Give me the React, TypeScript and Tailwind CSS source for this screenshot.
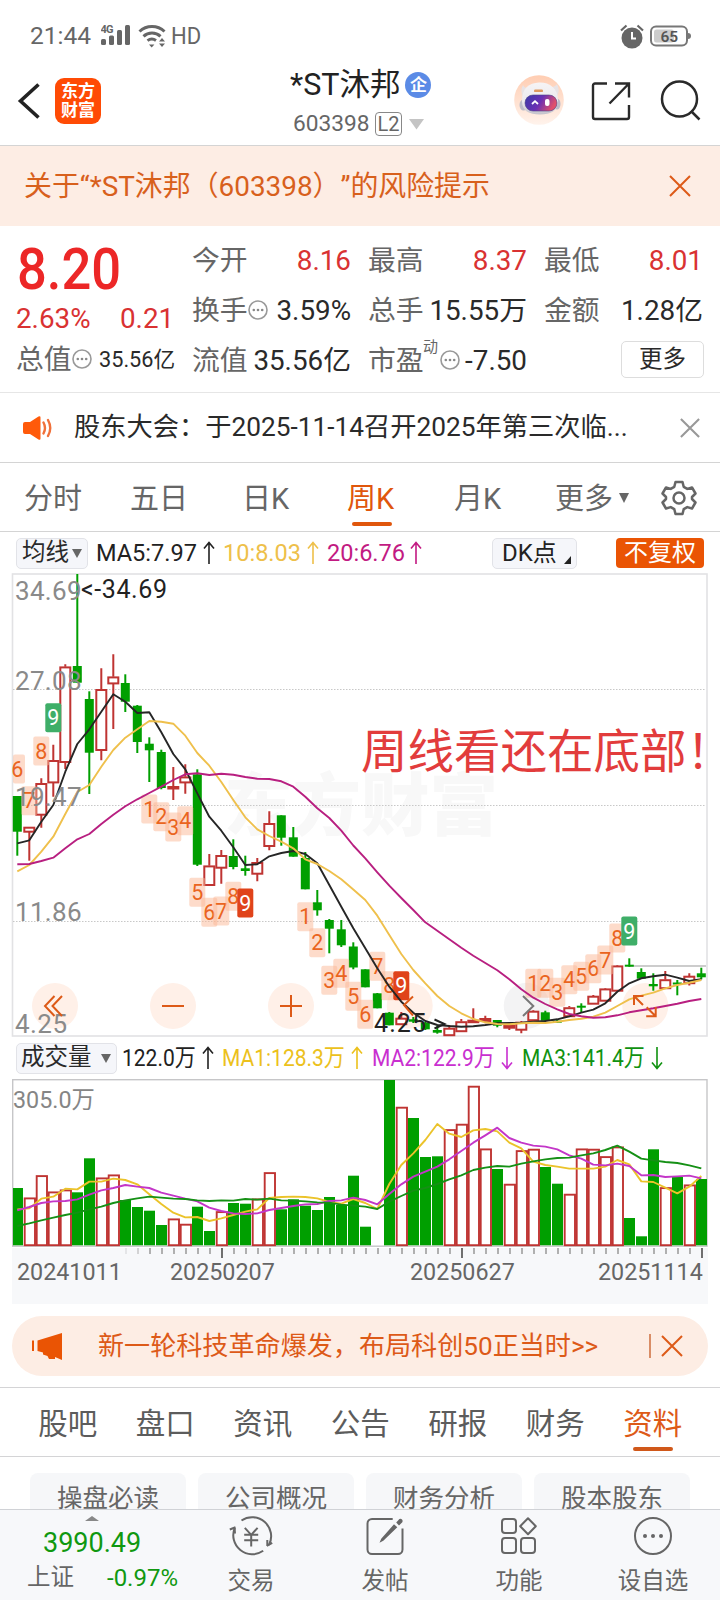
import type { ReactNode } from "react";

type Candle = [up: 0 | 1, top: number, bottom: number, high: number, low: number];

const X0 = 17.3;
const STEP = 12;
const px = (i: number) => X0 + STEP * i;

const GREEN = "#009f00";
const RED = "#bf3432";

const candles: Candle[] = [
  [0, 796, 831.7, 796, 855.7], [1, 827, 832, 827, 860.7], [1, 783.3, 815, 778.3, 827.7],
  [1, 760.3, 782.7, 744.7, 796.7], [1, 666.7, 762.3, 664.3, 769], [0, 666, 682.7, 574, 682.7],
  [0, 699, 752.7, 691.3, 794], [1, 689.3, 750.3, 668.3, 760.3], [1, 676.7, 683.7, 654.3, 729],
  [0, 683, 701.7, 674.3, 712], [0, 705.7, 742, 705, 753], [0, 743.7, 750.3, 737.3, 782],
  [0, 752, 788, 749.7, 789.3], [1, 786.3, 788.7, 767, 800], [1, 776.7, 782.7, 764.3, 793.7],
  [0, 774.3, 864.7, 769.3, 866], [1, 865.7, 885.3, 854, 885.3], [1, 855.3, 868, 850, 883.7],
  [0, 856, 867, 839.3, 869.3], [0, 868.3, 871, 855.7, 875.7], [1, 862.3, 874, 858, 881.3],
  [1, 823.3, 846.3, 811.3, 850.3], [0, 815.3, 837.7, 815.3, 845.7], [0, 837.3, 856.7, 827, 856.7],
  [0, 858, 889.3, 852, 889.3], [0, 902.3, 910.3, 890, 915.7], [0, 920, 928.7, 919, 953.3],
  [0, 929.3, 945.3, 920, 947], [0, 946.5, 967.5, 942.3, 969.3], [0, 969.3, 987.3, 969.3, 987.3],
  [0, 993.3, 1008.3, 993, 1008.3], [0, 1012.7, 1025.3, 1012, 1025.3], [1, 1018, 1024.5, 1012, 1025],
  [0, 1019.3, 1021.7, 1017, 1023], [0, 1022.7, 1029.3, 1022, 1030], [0, 1030, 1032.7, 1026, 1033.7],
  [1, 1028, 1035.5, 1025, 1036], [1, 1021.5, 1031.5, 1019, 1032], [1, 1020, 1021.7, 1008.3, 1021.7],
  [1, 1018.3, 1021.3, 1015.7, 1023.3], [0, 1020, 1025.7, 1020, 1027.3], [1, 1025, 1028, 1023, 1030],
  [1, 1022, 1030, 1021, 1033.3], [1, 1011, 1020.5, 1010.3, 1021], [0, 1012.3, 1020.7, 1010.7, 1021],
  [0, 1020.7, 1022.7, 1020, 1023], [1, 1007.5, 1016.5, 1006, 1017], [0, 1005.7, 1007.7, 1003.3, 1012.7],
  [1, 996, 1004, 995, 1004], [1, 988.7, 1001, 988, 1001], [1, 965.7, 991, 965, 991],
  [0, 964.7, 966.7, 958.3, 966.7], [0, 972, 978.7, 968.3, 978.7], [0, 984, 986.3, 973.3, 990.7],
  [1, 979.5, 988.5, 971, 989], [0, 982.5, 984.5, 980, 995.3], [1, 976, 983.5, 973.3, 985.5],
  [0, 973.3, 977.3, 967.7, 979.3],
];

const ma5 = [843.3, 840.3, 821.7, 805, 771.7, 744, 729.3, 711.7, 694.3, 701.7, 713, 712.3, 732.3, 754, 769.3, 793.3, 816.7, 830.7, 847.3, 865, 864.3, 856.3, 853, 851, 854, 863.3, 885, 906.7, 928.3, 948.3, 968.3, 986.7, 1001.7, 1012.7, 1021, 1025, 1026, 1026.7, 1026.3, 1025, 1023.3, 1023, 1022.7, 1021.7, 1021, 1019.3, 1016.3, 1012.7, 1009.7, 1003.3, 991.7, 983.3, 978.3, 976.3, 974.7, 977.7, 981, 979.3];
const ma10 = [871.3, 865, 851.7, 836.7, 814, 792, 785, 766.7, 750, 737.7, 729.3, 721, 721.7, 723.7, 735.7, 753, 765.7, 782, 800, 817.3, 829.3, 836, 841.7, 848.3, 859.3, 864, 871, 879.3, 889.5, 900, 915.7, 935, 954, 970, 983.3, 996, 1006, 1013.3, 1019, 1022.3, 1024, 1024.3, 1023.3, 1022.7, 1023, 1021.7, 1020, 1018.7, 1016.7, 1012.7, 1006, 999.3, 995.7, 992.7, 988.3, 985, 982.7, 980];
const ma20 = [864.3, 864, 861, 857.7, 848.3, 839.3, 834, 824, 814.7, 806.3, 799.3, 793, 786.7, 780, 774.3, 773.3, 775, 773.7, 774.7, 777, 778.7, 779, 781.3, 786.7, 796.7, 808.3, 818, 830.7, 845.5, 858.3, 872.3, 885.7, 898, 910, 922.3, 930.7, 939.3, 947.7, 955.7, 963, 970.3, 979.3, 989.3, 997.7, 1004, 1009.3, 1014, 1016.3, 1017.7, 1017.3, 1015.3, 1012.3, 1010.3, 1008.3, 1006, 1003.7, 1001, 999];

const volumeTop = [1188, 1198, 1175.7, 1192, 1190, 1192.3, 1158.3, 1178, 1175, 1200, 1207, 1210.7, 1225, 1219, 1224.3, 1206.7, 1231, 1211.7, 1203, 1203.7, 1199, 1172.7, 1209.3, 1199.3, 1205.7, 1210, 1197, 1205, 1175.7, 1226.7, 1245.3, 1080, 1107.3, 1118, 1157, 1156.3, 1129.7, 1124.3, 1086.3, 1149, 1169, 1184.3, 1150.7, 1149.3, 1167, 1183.7, 1194.3, 1149, 1149.3, 1156.7, 1147, 1218, 1236.3, 1149.3, 1187.7, 1177, 1185, 1179];
const volumeUp = new Set([1, 2, 3, 4, 7, 8, 13, 14, 17, 20, 21, 32, 36, 37, 38, 39, 41, 42, 43, 46, 47, 48, 49, 50, 54, 56]);

// Volume averages, in thirds of a pixel below y = 1030.
const third = (v: number) => 1030 + v / 3;
const vma1 = [538, 535, 506, 500, 476, 478, 455, 455, 446, 450, 463, 493, 522, 548, 562, 561, 573, 565, 555, 545, 538, 504, 501, 500, 501, 505, 516, 521, 507, 519, 537, 462, 405, 370, 330, 282, 311, 321, 301, 297, 304, 338, 355, 395, 405, 410, 416, 416, 416, 410, 390, 403, 454, 456, 473, 490, 470, 438].map(third);
const vma2 = [541, 531, 519, 514, 513, 508, 494, 481, 474, 465, 470, 474, 488, 497, 506, 514, 533, 543, 550, 552, 550, 540, 534, 528, 523, 522, 513, 511, 503, 510, 523, 492, 463, 440, 425, 410, 388, 363, 338, 316, 293, 324, 338, 347, 350, 358, 376, 386, 404, 406, 401, 408, 436, 435, 441, 439, 437, 445].map(third);
const vma3 = [588, 580, 571, 563, 555, 548, 538, 530, 519, 511, 505, 500, 503, 506, 507, 511, 513, 511, 512, 507, 509, 506, 511, 512, 514, 517, 518, 524, 527, 530, 537, 515, 498, 482, 474, 462, 448, 436, 420, 413, 408, 410, 401, 394, 388, 384, 383, 376, 370, 360, 347, 365, 386, 391, 396, 399, 406, 415].map(third);

const marks: [i: number, label: string, y: number, fill?: string][] = [
  [0, "6", 769], [1, "7", 800.7], [2, "8", 751], [3, "9", 717.7, "#3fae68"],
  [11, "1", 809], [12, "2", 816.7], [13, "3", 827], [14, "4", 820.7],
  [15, "5", 892.3], [16, "6", 912.3], [17, "7", 911], [18, "8", 896.3], [19, "9", 903, "#e0431a"],
  [24, "1", 916.7], [25, "2", 942.7], [26, "3", 980.3], [27, "4", 973.3], [28, "5", 996.3], [29, "6", 1014.3],
  [30, "7", 966.3], [31, "8", 985.7], [32, "9", 985.7, "#e0431a"],
  [43, "1", 983.3], [44, "2", 983.3], [45, "3", 992.3], [46, "4", 979.7], [47, "5", 976.3],
  [48, "6", 968.7], [49, "7", 960], [50, "8", 938], [51, "9", 931, "#3fae68"],
];

const line = (ys: number[]) => ys.map((y, i) => `${px(i)},${y}`).join(" ");

function Cross({ size, color, width = 2 }: { size: number; color: string; width?: number }) {
  return (
    <svg width={size} height={size} viewBox="0 0 22 22" stroke={color} strokeWidth={width} fill="none" className="shrink-0">
      <path d="M1 1 21 21M21 1 1 21" />
    </svg>
  );
}

function Arrow({ down, color }: { down?: boolean; color: string }) {
  return (
    <svg width="12" height="24" viewBox="0 0 12 24" fill="none" stroke={color} strokeWidth="1.6" className="shrink-0">
      <path d={down ? "M6 1v21M1 16.5l5 6 5-6" : "M6 23V2M1 7.5l5-6 5 6"} />
    </svg>
  );
}

function Dots() {
  return (
    <svg width="20" height="22" viewBox="0 0 20 22" className="shrink-0">
      <circle cx="10" cy="10" r="9" fill="none" stroke="#999" strokeWidth="1.6" />
      <g fill="#888">
        <circle cx="5.8" cy="10" r="1.3" />
        <circle cx="10" cy="10" r="1.3" />
        <circle cx="14.2" cy="10" r="1.3" />
      </g>
    </svg>
  );
}

function StatusBar() {
  return (
    <div className="flex h-[72px] shrink-0 items-center pl-[30px] text-[24.5px] leading-none text-[#666]">
      <span className="w-[71px]">21:44</span>
      <svg width="30" height="22" viewBox="0 0 30 22" fill="#666" className="-mt-0.5">
        <text x="-0.5" y="8.5" fontSize="11" fontWeight="700" textLength="13">4G</text>
        <rect x="0" y="15" width="5" height="6" rx="1.5" />
        <rect x="8" y="11.5" width="5" height="9.5" rx="1.5" />
        <rect x="16" y="6" width="5" height="15" rx="1.5" />
        <rect x="24" y="1" width="5" height="20" rx="1.5" />
      </svg>
      <svg width="29" height="24" viewBox="0 0 29 24" fill="none" stroke="#666" strokeWidth="3" className="ml-[7px]">
        <path d="M1.5 7.5a18 18 0 0 1 25 0" />
        <path d="M5.5 12.3a12.5 12.5 0 0 1 17 0" />
        <path d="M9.5 16.6a7.3 7.3 0 0 1 8.5-.2" />
        <path d="M11 20.5h5.4L13.7 23.5z" fill="#666" stroke="none" />
        <path d="M21 17.5h6l-3-3.5zM21 19.5h6l-3 3.5z" fill="#666" stroke="none" />
      </svg>
      <span className="ml-[4px] w-[29px]">
        <span className="inline-block origin-left scale-x-[0.9]">HD</span>
      </span>
      <svg width="24" height="25" viewBox="0 0 24 25" fill="none" className="ml-[420px]">
        <circle cx="12" cy="14" r="10.5" fill="#666" />
        <path d="M1 6.5 6.5 1.5M23 6.5 17.5 1.5" stroke="#666" strokeWidth="2.2" />
        <path d="M12 8v6.5h4" stroke="#fff" strokeWidth="2" />
      </svg>
      <svg width="42" height="22" viewBox="0 0 42 22" fill="none" className="-mt-px ml-[6px]">
        <rect x="1" y="1.5" width="36" height="19" rx="5" stroke="#777" strokeWidth="2" />
        <rect x="4" y="4.5" width="20" height="13" rx="2.5" fill="#ccc" />
        <path d="M38 8q3 0 3 3t-3 3z" fill="#777" />
        <text x="19.3" y="16.5" fontSize="15.5" fontWeight="600" fill="#555" textAnchor="middle">65</text>
      </svg>
    </div>
  );
}

function Header() {
  return (
    <div className="flex h-[74px] shrink-0 items-start border-b border-[#d4d4d4]">
      <svg width="24" height="36" viewBox="0 0 24 36" fill="none" stroke="#222" strokeWidth="3.6" className="mt-[11px] ml-[17px]">
        <path d="M21.5 1.5 3.5 18l18 16.5" />
      </svg>
      <div className="mt-[6px] ml-[14px] flex h-[46px] w-[46px] flex-col items-center justify-center rounded-[9px] bg-[#ff4b05] text-[17px] leading-[19px] font-bold text-white">
        <span>东方</span>
        <span>财富</span>
      </div>
      <div className="ml-[187px] w-[150px]">
        <div className="-mt-[3px] flex h-[32px] items-center text-[30.5px] leading-none whitespace-nowrap text-[#222]">
          <span className="ml-[2px]">*ST沐邦</span>
          <span className="ml-[5px] flex h-[26px] w-[26px] items-center justify-center rounded-full bg-[#5b8be6] text-[17px] font-bold text-white">
            企
          </span>
        </div>
        <div className="mt-[11px] flex h-[24px] items-center pl-[5px] text-[22.7px] leading-none text-[#666]">
          <span className="w-[82px]">603398</span>
          <span className="flex h-[24px] w-[27px] items-center justify-center rounded-[4px] border-[1.5px] border-[#888] text-[20px]">L2</span>
          <svg width="15" height="11" viewBox="0 0 15 11" className="ml-[7px]">
            <path d="M0 0h15L7.5 10.5z" fill="#c4c4c4" />
          </svg>
        </div>
      </div>
      <svg width="50" height="50" viewBox="0 0 50 50" className="mt-[3px] ml-[76px]">
        <defs>
          <linearGradient id="halo" x1="0" y1="0" x2="0" y2="1">
            <stop offset="0" stopColor="#ffcdb2" />
            <stop offset="1" stopColor="#fff3ec" />
          </linearGradient>
          <linearGradient id="visor" x1="0" y1="0" x2="1" y2="0.3">
            <stop offset="0" stopColor="#3a3aa8" />
            <stop offset="0.55" stopColor="#6a30b4" />
            <stop offset="1" stopColor="#e0506c" />
          </linearGradient>
          <linearGradient id="shell" x1="0" y1="0" x2="0" y2="1">
            <stop offset="0" stopColor="#f6f4f5" />
            <stop offset="0.6" stopColor="#eceaee" />
            <stop offset="1" stopColor="#c3c2cb" />
          </linearGradient>
        </defs>
        <circle cx="25" cy="25" r="24.8" fill="url(#halo)" />
        <path d="M9 22Q6 15 9 10q2 4 7 3zM42 22q5-6 1-13-2 3-8 4z" fill="#e8e3e5" />
        <ellipse cx="9.5" cy="30" rx="4" ry="5.5" fill="#bdbcc8" />
        <ellipse cx="43" cy="29" rx="3.5" ry="5.5" fill="#bdbcc8" />
        <path d="M8 26C8 13 15 8 25 7.500S44 13 44 25c0 11-7 14.500-18 14.500S8 36 8 26z" fill="url(#shell)" />
        <rect x="20" y="14.5" width="9" height="2.6" rx="1.200" fill="#e09a60" />
        <rect x="11" y="20" width="32" height="16" rx="8" fill="url(#visor)" stroke="#4b3f86" strokeWidth="0.600" />
        <path d="m18 29 3-2.800 3 2.800" stroke="#fff" strokeWidth="1.800" fill="none" />
        <rect x="31" y="24" width="4.500" height="7" rx="2" fill="#fff" />
      </svg>
      <svg width="40" height="40" viewBox="0 0 40 40" fill="none" stroke="#2a2a2a" strokeWidth="2.4" className="mt-[9px] ml-[27px]">
        <path d="M16 2.5H4a2 2 0 0 0-2 2V36a2 2 0 0 0 2 2h32a2 2 0 0 0 2-2V24" />
        <path d="M24 2.5h14V16.500M38 2.5 18.5 22.5" />
      </svg>
      <svg width="42" height="42" viewBox="0 0 42 42" fill="none" stroke="#2a2a2a" strokeWidth="2.5" className="mt-[8px] ml-[29px]">
        <circle cx="19.5" cy="19" r="17.5" />
        <path d="m31 31 8.5 8.5" />
      </svg>
    </div>
  );
}

function Cell({ label, value, tone = "text-[#2a2a2a]", extra }: { label: string; value: string; tone?: string; extra?: ReactNode }) {
  return (
    <div className="flex items-center whitespace-nowrap">
      <span className="w-[55px] text-[#666]">{label}</span>
      {extra}
      <span className={`ml-auto ${tone}`}>{value}</span>
    </div>
  );
}

function Quote() {
  const red = "text-[#d93232]";
  return (
    <div className="flex h-[167px] shrink-0 border-b border-[#e6e6e6] pt-[9.5px] text-[27.8px] leading-none">
      <div className="w-[192px] pl-[16px]">
        <div className="mt-[8px] h-[52px] pl-[1px] text-[56.5px] leading-[52px] font-medium text-[#ec2727]">
          <span className="inline-block origin-left scale-x-[0.93]">8.20</span>
        </div>
        <div className={`mt-[6px] flex h-[34px] items-center ${red}`}>
          <span className="w-[104px]">2.63%</span>
          <span>0.21</span>
        </div>
        <div className="mt-[7px] flex h-[34px] items-center whitespace-nowrap text-[#666]">
          <span className="w-[55px]">总值</span>
          <span className="ml-px"><Dots /></span>
          <span className="ml-[7px] text-[21.7px] text-[#2a2a2a]">35.56亿</span>
        </div>
      </div>
      <div className="grid grid-cols-[159px_159px_159px] grid-rows-[50px_50px_50px] gap-x-[17px]">
        <Cell label="今开" value="8.16" tone={red} />
        <Cell label="最高" value="8.37" tone={red} />
        <Cell label="最低" value="8.01" tone={red} />
        <Cell label="换手" value="3.59%" extra={<span className="ml-px"><Dots /></span>} />
        <Cell label="总手" value="15.55万" />
        <Cell label="金额" value="1.28亿" />
        <Cell label="流值" value="35.56亿" />
        <Cell
          label="市盈"
          value="-7.50"
          extra={
            <>
              <span className="-mt-[26px] w-[17px] text-[15px] text-[#666]">动</span>
              <Dots />
            </>
          }
        />
        <div className="flex items-center justify-end">
          <div className="-mr-[1px] -mt-0.5 flex h-[37px] w-[83px] items-center justify-center rounded-[5px] border-[1.5px] border-[#ddd] text-[23.5px] text-[#2a2a2a]">更多</div>
        </div>
      </div>
    </div>
  );
}

function News() {
  return (
    <div className="flex h-[70px] shrink-0 items-center border-b border-[#d4d4d4] pl-[23px] leading-none">
      <svg width="30" height="24" viewBox="0 0 30 24" fill="none" className="shrink-0">
        <path d="M0 8q0-2 2-2h5l8.500-5.500q2-1 2 1v21q0 2-2 1L7 18H2q-2 0-2-2z" fill="#ff5a0a" />
        <path d="M20.5 6.5q3 5.500 0 11M25 4q4.500 8 0 16" stroke="#f0703a" strokeWidth="2.4" strokeLinecap="round" />
      </svg>
      <span className="ml-[21px] w-[606px] text-[26.25px] whitespace-nowrap text-[#2a2a2a]">股东大会：于2025-11-14召开2025年第三次临...</span>
      <Cross size={20} color="#999" width={2.3} />
    </div>
  );
}

function PeriodTabs() {
  return (
    <div className="flex h-[69px] shrink-0 items-center border-b border-[#d4d4d4] pt-[5px] pl-[24px] text-[29px] leading-none whitespace-nowrap text-[#666]">
      <span className="w-[106px]">分时</span>
      <span className="w-[112px]">五日</span>
      <span className="w-[105px]">日K</span>
      <span className="flex h-full w-[107px] flex-col text-[#e0560c]">
        <span className="mt-[17px]">周K</span>
        <span className="mt-[8px] ml-[5px] h-[4px] w-[40px] rounded-full bg-[#e0560c]" />
      </span>
      <span className="w-[101px]">月K</span>
      <span className="w-[64px]">更多</span>
      <svg width="10" height="10" viewBox="0 0 10 10" fill="#666" className="-mt-1">
        <path d="M0 0h10L5 10z" />
      </svg>
      <svg width="36" height="36" viewBox="0 0 36 36" fill="none" stroke="#666" strokeWidth="2.5" strokeLinejoin="round" className="-mt-1 ml-[32px]">
        <path d="M14.5 2h7l1.2 4.8 3.6 2.1 4.7-1.4 3.5 6L31 17v2l3.5 3.5-3.5 6-4.700-1.400-3.600 2.100L21.500 34h-7l-1.200-4.800-3.600-2.100L5 28.500l-3.500-6L5 19v-2l-3.500-3.500 3.500-6 4.700 1.400 3.600-2.100z" />
        <circle cx="18" cy="18" r="5.5" />
      </svg>
    </div>
  );
}

function AverageRow() {
  return (
    <div className="flex h-[41px] shrink-0 items-center pt-px pl-[16px] text-[24px] leading-none whitespace-nowrap">
      <div className="flex h-[31px] w-[72px] items-center rounded-[5px] border-[1.5px] border-[#e2e3e8] bg-[#f5f6fa] pl-[5px] text-[23.5px] text-[#2a2a2a]">
        均线
        <svg width="10" height="9" viewBox="0 0 10 9" fill="#666" className="ml-[3px]">
          <path d="M0 0h10L5 9z" />
        </svg>
      </div>
      <span className="ml-[8px] w-[107px] text-[#222]"><span className="inline-block origin-left scale-x-[0.98]">MA5:7.97</span></span>
      <Arrow color="#222" />
      <span className="ml-[8px] w-[84px] text-[#eec04a]"><span className="inline-block origin-left scale-x-[0.98]">10:8.03</span></span>
      <Arrow color="#eec04a" />
      <span className="ml-[8px] w-[83px] text-[#c21a82]"><span className="inline-block origin-left scale-x-[0.98]">20:6.76</span></span>
      <Arrow color="#c21a82" />
      <div className="ml-[70px] flex h-[31px] w-[85px] items-center rounded-[5px] border-[1.5px] border-[#e2e3e8] bg-[#f5f6fa] pl-[9px] text-[#222]">
        DK点
        <svg width="7" height="8" viewBox="0 0 7 8" fill="#222" className="mt-[14px] ml-[7px]">
          <path d="M7 0v8H0z" />
        </svg>
      </div>
      <div className="ml-[39px] flex h-[30px] w-[88px] items-center justify-center rounded-[4px] bg-[#ea5404] text-[24px] text-white">不复权</div>
    </div>
  );
}

function PriceChart() {
  return (
    <svg width="720" height="464" viewBox="0 573 720 464" className="block shrink-0">
      <rect x="12.5" y="574" width="694.5" height="462" fill="none" stroke="#e2e2e4" strokeWidth="1.6" />
      <text x="224" y="830" fontSize="68.5" fontWeight="900" fill="#f8f8f8">东方财富</text>
      <g stroke="#c8c8c8" strokeWidth="1.2" strokeDasharray="1.5 1.5">
        <path d="M13 689.5H706M13 805.500H706M13 921.500H706" />
      </g>
      <g>
        <circle cx="409.7" cy="1005.7" r="23" fill="#fff0e8" />
        <circle cx="526.7" cy="1005.7" r="23" fill="#f3f3f4" />
        <circle cx="645.3" cy="1006" r="23" fill="#fff0e8" />
        <circle cx="55" cy="1006" r="23" fill="#fff0e8" />
        <circle cx="173" cy="1006" r="23" fill="#fff0e8" />
        <circle cx="291" cy="1006" r="23" fill="#fff0e8" />
      </g>
      <path d="M629 966H706" stroke="#ccc" strokeWidth="1.8" />
      {candles.map(([up, top, bottom, high, low], i) => (
        <g key={i}>
          {up ? (
            <>
              <path d={`M${px(i)} ${high}V${top}M${px(i)} ${bottom}V${low}`} stroke={RED} strokeWidth="2" />
              <rect x={px(i) - 5} y={top + 0.7} width="10" height={Math.max(bottom - top - 1, 1.5)} fill="#fff" stroke={RED} strokeWidth="2" />
            </>
          ) : (
            <>
              <path d={`M${px(i)} ${high}V${low}`} stroke={GREEN} strokeWidth="2" />
              <rect x={px(i) - 4.5} y={top} width="9" height={bottom - top} fill={GREEN} />
            </>
          )}
        </g>
      ))}
      <g fontSize="21.5" textAnchor="middle">
        {marks.map(([i, label, y, fill]) => (
          <g key={i}>
            <rect x={Math.max(px(i) - 8, 13)} y={y - 14.5} width={i === 0 ? 12 : 16} height="29" rx="2" fill={fill ?? "#fbb896"} fillOpacity={fill ? 1 : 0.5} />
            <text x={px(i)} y={y + 7.5} fill={fill ? "#fff" : "#ea6420"}>{label}</text>
          </g>
        ))}
      </g>
      <g fill="none" strokeWidth="1.9" strokeLinejoin="round">
        <polyline points={line(ma5)} stroke="#262626" />
        <polyline points={line(ma10)} stroke="#efc04c" />
        <polyline points={line(ma20)} stroke="#b81f80" />
      </g>
      <g fontSize="26" fill="#8a8a8a">
        <text x="15" y="600" textLength="66.5">34.69</text>
        <text x="15" y="690" textLength="66.5">27.08</text>
        <text x="15" y="806" textLength="66.5">19.47</text>
        <text x="15" y="920.700" textLength="66.5">11.86</text>
        <text x="15" y="1033" textLength="52">4.25</text>
      </g>
      <g fontSize="25" fill="#222">
        <text x="81" y="598" textLength="86">&lt;-34.69</text>
        <text x="374" y="1032" textLength="52">4.25</text>
        <path d="m434.5 1019.500 10 4.500-10 4.500" fill="none" stroke="#222" strokeWidth="2" />
      </g>
      <g fill="none" stroke="#dd5a18" strokeWidth="2">
        <path d="M54.5 996 45 1006l9.500 10M62 996l-9.500 10 9.500 10" />
        <path d="M162 1006h22M280 1006h22M291 995v22" />
        <path d="m413 996.5-9 8.500 9 10.500" />
        <path d="M643.5 996h-9.500v9M634 996l9 9M655.700 1007v9.300h-9.500M655.700 1016.300l-9-9" />
        <path d="m523 996 10.300 10-10.300 10" stroke="#777" />
      </g>
      <text x="361" y="767.5" fontSize="46.5" fill="#e23c3c">周线看还在底部！</text>
    </svg>
  );
}

function Squeezed({ children, className }: { children: ReactNode; className: string }) {
  return (
    <span className={className}>
      <span className="inline-block origin-left scale-x-[0.875]">{children}</span>
    </span>
  );
}

function VolumeRow() {
  return (
    <div className="flex h-[42px] shrink-0 items-center pl-[16px] text-[24px] leading-none whitespace-nowrap">
      <div className="flex h-[31px] w-[101px] shrink-0 items-center rounded-[5px] border-[1.5px] border-[#e2e3e8] bg-[#f5f6fa] pl-[4px] text-[23.5px] text-[#2a2a2a]">
        成交量
        <svg width="10" height="9" viewBox="0 0 10 9" fill="#666" className="ml-[9px]">
          <path d="M0 0h10L5 9z" />
        </svg>
      </div>
      <Squeezed className="ml-[5px] w-[80px] shrink-0 text-[#222]">122.0万</Squeezed>
      <Arrow color="#222" />
      <Squeezed className="ml-[8px] w-[129px] shrink-0 text-[#ecc11c]">MA1:128.3万</Squeezed>
      <Arrow color="#ecc11c" />
      <Squeezed className="ml-[9px] w-[129px] shrink-0 text-[#c92fd0]">MA2:122.9万</Squeezed>
      <Arrow down color="#c92fd0" />
      <Squeezed className="ml-[9px] w-[129px] shrink-0 text-[#109210]">MA3:141.4万</Squeezed>
      <Arrow down color="#109210" />
    </div>
  );
}

function VolumeChart() {
  return (
    <svg width="720" height="226" viewBox="0 1079 720 226" className="block shrink-0">
      <rect x="12" y="1248" width="696" height="56" fill="#f7f8fa" />
      <rect x="12.7" y="1079.7" width="694.3" height="166.5" fill="#fff" stroke="#c6c6c8" strokeWidth="1.4" />
      {volumeTop.map((top, i) =>
        volumeUp.has(i) ? (
          <rect key={i} x={px(i) - 4.6} y={top + 0.4} width="10.3" height={1244.8 - top} fill="#fff" stroke={RED} strokeWidth="1.9" />
        ) : (
          <rect key={i} x={i ? px(i) - 5.3 : 13} y={top} width={i ? 11 : 10} height={1245.3 - top} fill={GREEN} />
        ),
      )}
      <g fill="none" strokeWidth="1.9" strokeLinejoin="round">
        <polyline points={line(vma1)} stroke="#ebc32a" />
        <polyline points={line(vma2)} stroke="#c336c8" />
        <polyline points={line(vma3)} stroke="#159015" />
      </g>
      {volumeTop.map((_, i) => {
        if (i < 9) return null;
        const major = i === 17 || i === 37 || i === 57;
        return (
          <path
            key={i}
            d={`M${px(i) + 0.7} 1248V${major ? 1258 : 1254}`}
            stroke={major ? "#606060" : "#a8a8a8"}
            strokeWidth="1.8"
            opacity={i < 11 ? (i - 8) * 0.25 : 1}
          />
        );
      })}
      <text x="13" y="1108" fontSize="23.3" fill="#858585">305.0万</text>
      <g fontSize="23.3" fill="#666">
        <text x="17" y="1279.7">20241011</text>
        <text x="170" y="1279.7">20250207</text>
        <text x="410" y="1279.7">20250627</text>
        <text x="598" y="1279.7">20251114</text>
      </g>
    </svg>
  );
}

function Promo() {
  return (
    <div className="mx-[12px] mt-[11px] flex h-[60px] shrink-0 items-center rounded-full bg-[#fdede4] pl-[20px] leading-none text-[#dd5a18]">
      <svg width="31" height="27" viewBox="0 0 31 27" fill="#ea5404" className="shrink-0">
        <path d="M0 7.5h2v10.500H0zM5.500 7.500 30 0v27l-7-3v2h-6l-1.500-3-4.500-1.500v-2L5.500 18z" />
      </svg>
      <span className="ml-[35px] w-[551px] text-[26.1px] whitespace-nowrap">新一轮科技革命爆发，布局科创50正当时&gt;&gt;</span>
      <span className="h-[24px] w-[1.5px] bg-[#d98d66]" />
      <span className="ml-[10px]"><Cross size={22} color="#dd5a18" width={2} /></span>
    </div>
  );
}

const sections = ["股吧", "盘口", "资讯", "公告", "研报", "财务", "资料"];

function SectionTabs() {
  return (
    <div className="mt-[11px] flex h-[70px] shrink-0 border-y border-[#d4d4d6] pl-[19px] text-[29.5px] leading-none text-[#5c5c5c]">
      {sections.map((s) => (
        <div key={s} className={`flex w-[97.500px] flex-col items-center pt-[22px] ${s === "资料" ? "text-[#dd5a18]" : ""}`}>
          <span>{s}</span>
          {s === "资料" && <span className="mt-[7px] h-[4px] w-[40px] rounded-full bg-[#d0581a]" />}
        </div>
      ))}
    </div>
  );
}

function Chips() {
  return (
    <div className="flex h-[52px] shrink-0 gap-[12px] overflow-hidden px-[30px] pt-[16px] text-[25.500px] leading-none text-[#666]">
      {["操盘必读", "公司概况", "财务分析", "股本股东"].map((c) => (
        <div key={c} className="h-[60px] w-[156px] shrink-0 rounded-[8px] bg-[#f6f7f9] pt-[12.500px] text-center">{c}</div>
      ))}
    </div>
  );
}

function NavItem({ label, left, children }: { label: string; left: string; children: ReactNode }) {
  return (
    <div className={`flex w-[80px] shrink-0 flex-col items-center ${left}`}>
      <svg width="44" height="40" viewBox="0 0 44 40" fill="none" stroke="#666" strokeWidth="2" className="mt-[6px]">
        {children}
      </svg>
      <span className="mt-[14px] text-[23.500px] leading-none text-[#666]">{label}</span>
    </div>
  );
}

function BottomNav() {
  return (
    <div className="flex h-[91px] shrink-0 border-t border-[#d0d2d6] bg-[#f7f8fa] whitespace-nowrap">
      <div className="w-[184px] shrink-0">
        <svg width="14" height="5" viewBox="0 0 14 5" className="mt-[6px] ml-[85px]">
          <path d="M7 0 14 5H0z" fill="#888" />
        </svg>
        <div className="mt-[7px] ml-[43px] text-[27px] leading-[30px] text-[#109810]">3990.49</div>
        <div className="mt-[8px] flex pl-[27px] text-[23.500px] leading-none">
          <span className="w-[80px] text-[#666]">上证</span>
          <span className="text-[24px] text-[#109810]">-0.97%</span>
        </div>
      </div>
      <NavItem label="交易" left="ml-[27px]">
        <path d="M12.5 4.500A19 19 0 0 1 40 29M34.200 34.800A19 19 0 0 1 5.800 11.800" />
        <path d="M.8 13.500 6.500 11.200M5.500 11l.5 6.500M43.200 26.800l-5.400 3M38.300 30v-6" />
        <path d="m15.800 11.800 6.400 7 6.400-7M22.200 18.800V30.500M15.200 18.800h14M15.200 24.200h14" />
      </NavItem>
      <NavItem label="发帖" left="ml-[54px]">
        <path d="M29.7 3H9a4.500 4.500 0 0 0-4.500 4.500v26A4.500 4.500 0 0 0 9 38h26a4.500 4.500 0 0 0 4.500-4.500V12.500" />
        <path d="m16.500 26.800 1.700-4L31 8.300l3.300 3L20.300 24.800zM33.200 6.500l3.200-3.400q1.500-.8 2.600.4t.3 2.700L36 9.500z" fill="#666" stroke="none" />
      </NavItem>
      <NavItem label="功能" left="ml-[54px]">
        <rect x="5" y="3" width="14" height="14" rx="3" />
        <rect x="5" y="22" width="14" height="15" rx="3" />
        <rect x="24" y="22" width="14" height="15" rx="3" />
        <path d="m31 2.200 7.800 8-7.800 8-7.800-8z" strokeLinejoin="round" />
      </NavItem>
      <NavItem label="设自选" left="ml-[54px]">
        <circle cx="22" cy="20" r="18" />
        <g fill="#666" stroke="none">
          <circle cx="14" cy="20" r="2" />
          <circle cx="22" cy="20" r="2" />
          <circle cx="30" cy="20" r="2" />
        </g>
      </NavItem>
    </div>
  );
}

export default function App() {
  return (
    <div className="flex h-[1600px] w-[720px] flex-col overflow-hidden bg-white font-[Roboto,'Noto_Sans_CJK_SC',sans-serif]" lang="zh-CN">
      <StatusBar />
      <Header />
      <div className="flex h-[80px] shrink-0 items-center bg-[#fdede4] pl-[24px] text-[27.900px] leading-none whitespace-nowrap text-[#d8601c] [text-spacing-trim:space-all]">
        <span className="mt-0.5 w-[645px]">关于“*ST沐邦（603398）”的风险提示</span>
        <Cross size={22} color="#dd5a18" width={2} />
      </div>
      <Quote />
      <News />
      <PeriodTabs />
      <AverageRow />
      <PriceChart />
      <VolumeRow />
      <VolumeChart />
      <Promo />
      <SectionTabs />
      <Chips />
      <BottomNav />
    </div>
  );
}
